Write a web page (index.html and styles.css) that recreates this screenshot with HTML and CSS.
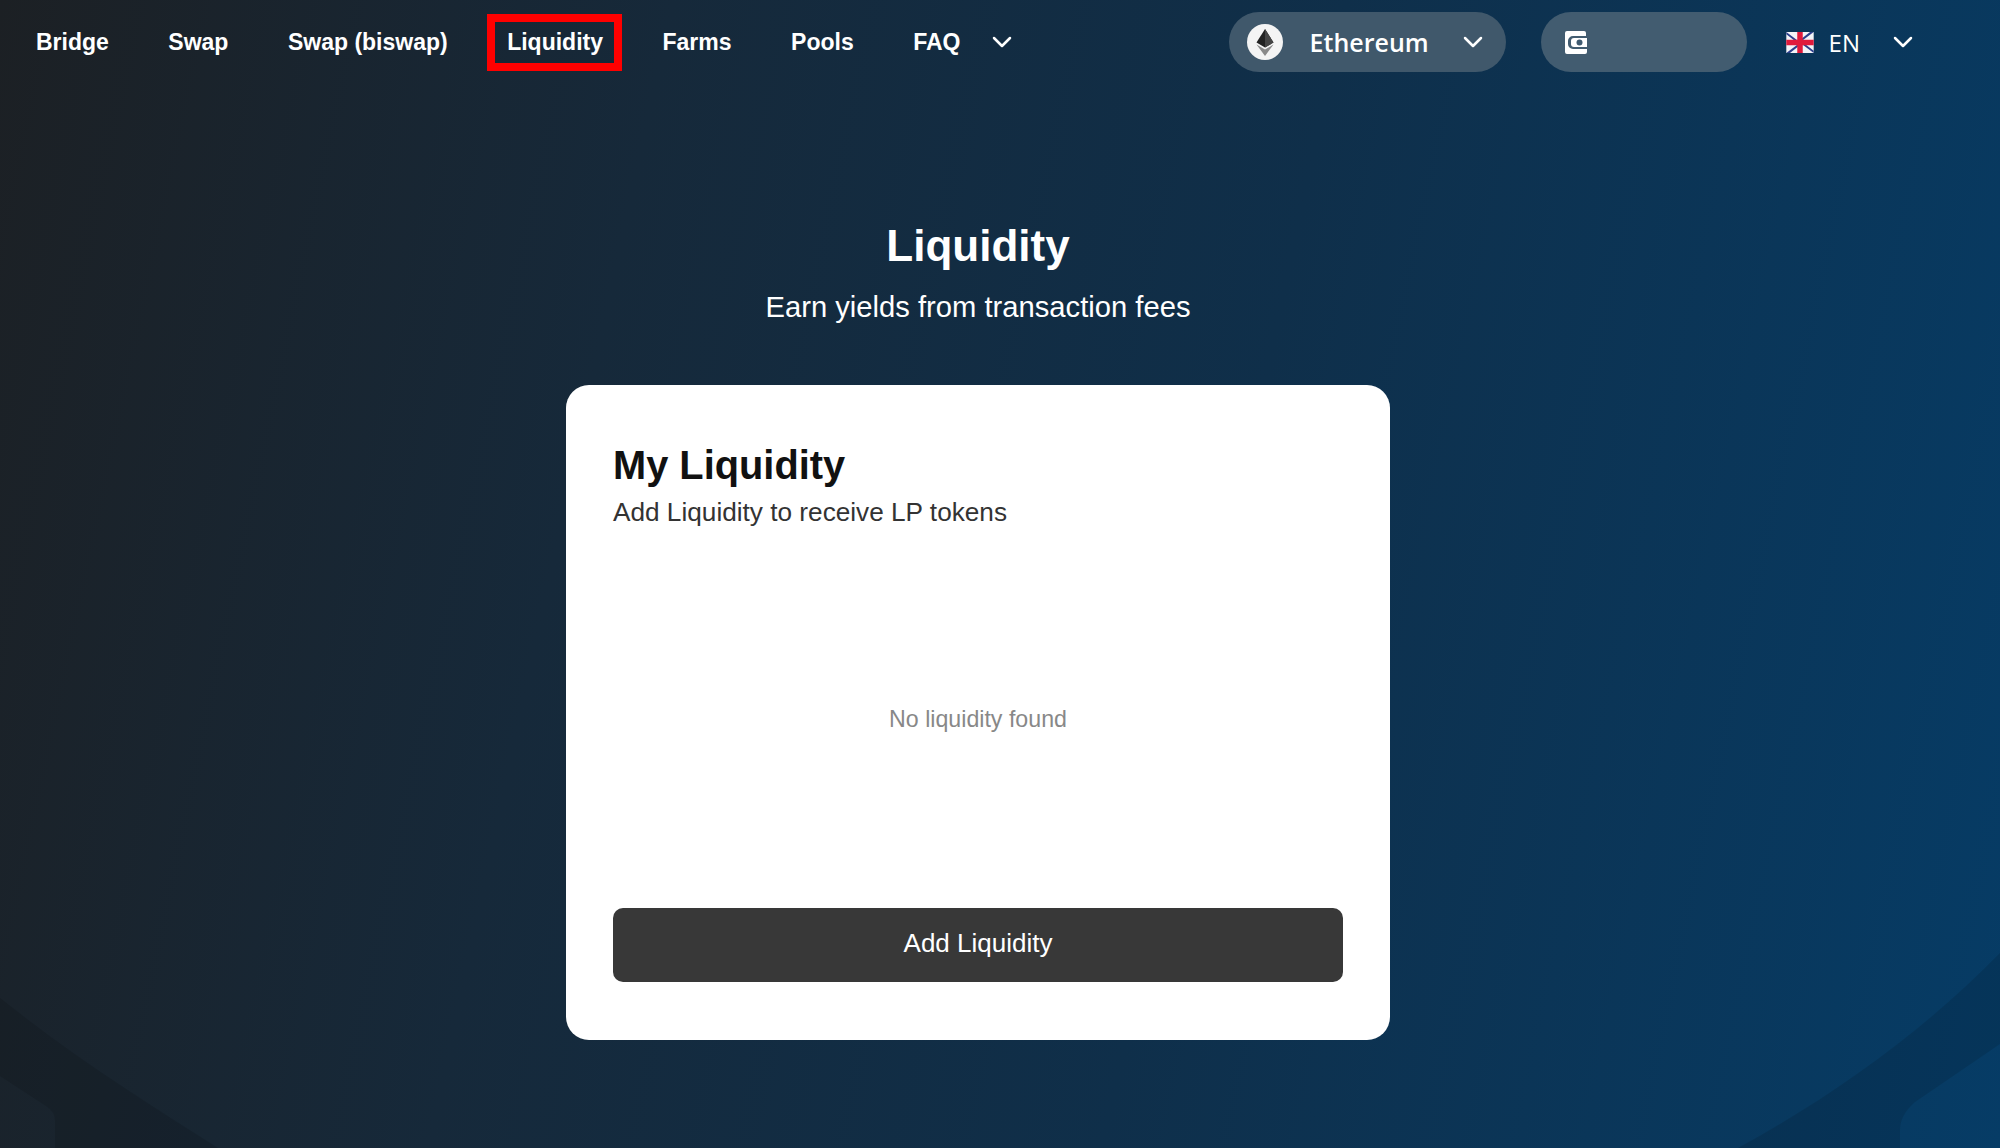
FILE: index.html
```html
<!DOCTYPE html>
<html lang="en">
<head>
<meta charset="utf-8">
<title>Liquidity</title>
<link rel="stylesheet" href="styles.css">
</head>
<body>
<svg class="backdrop" viewBox="0 0 2000 1148" aria-hidden="true">
  <path class="band" d="M0 998C75 1058 150 1105 218 1148H55V1120Q55 1112 46 1106L0 1076Z"/>
  <path class="band" d="M2000 953C1925 1030 1835 1095 1738 1148H1900V1130Q1900 1115 1915 1102L2000 1044Z"/>
</svg>
<header class="topbar">
  <nav class="nav">
    <a class="nav-link">Bridge</a>
    <a class="nav-link">Swap</a>
    <a class="nav-link">Swap (biswap)</a>
    <a class="nav-link nav-link-marked">Liquidity</a>
    <a class="nav-link">Farms</a>
    <a class="nav-link">Pools</a>
    <span class="nav-more">
      <a class="nav-link">FAQ</a>
      <svg class="chevron" viewBox="0 0 20 12"><path d="M2 2l8 8 8-8"/></svg>
    </span>
  </nav>
  <div class="actions">
    <button class="pill pill-network">
      <svg class="eth-icon" viewBox="0 0 36 36">
        <circle cx="18" cy="18" r="18" fill="#f4f4f4"/>
        <path d="M18 5l-8.500 13.500 8.500 5 8.500-5z" fill="#222"/>
        <path d="M18 5v18.500l8.500-5z" fill="#444"/>
        <path d="M18 25.500l-8.500-5L18 32l8.500-11.500z" fill="#8a8a8a"/>
      </svg>
      <span class="pill-label">Ethereum</span>
      <svg class="chevron" viewBox="0 0 20 12"><path d="M2 2l8 8 8-8"/></svg>
    </button>
    <button class="pill pill-wallet">
      <svg class="wallet-icon" viewBox="0 0 22 23">
        <path d="M2 0h17a2 2 0 0 1 2 2v3H8a5 5 0 0 0-5 5v3a5 5 0 0 0 5 5h14v3a2 2 0 0 1-2 2H2a2 2 0 0 1-2-2V2a2 2 0 0 1 2-2z" fill="#fff"/>
        <path d="M9 7h13v9H9a3 3 0 0 1-3-3v-3a3 3 0 0 1 3-3z" fill="#fff"/>
        <circle cx="14.500" cy="11.500" r="3" fill="#3f5a70"/>
      </svg>
    </button>
    <div class="lang">
      <svg class="flag" viewBox="0 0 60 46">
        <rect width="60" height="46" fill="#f4f4f8"/>
        <path d="M0 0l24 18H17L0 5zM60 0L36 18h-7L52 0zM0 46l24-18h7L8 46zM60 46L36 28h7l17 13z" fill="#2c3e8c"/>
        <path d="M24 0h12v46H24zM0 17h60v12H0z" fill="#e01a3c"/>
      </svg>
      <span class="lang-label">EN</span>
      <svg class="chevron" viewBox="0 0 20 12"><path d="M2 2l8 8 8-8"/></svg>
    </div>
  </div>
</header>
<main class="page">
  <h1 class="page-title">Liquidity</h1>
  <p class="page-sub">Earn yields from transaction fees</p>
  <section class="card">
    <h2 class="card-title">My Liquidity</h2>
    <p class="card-sub">Add Liquidity to receive LP tokens</p>
    <p class="empty">No liquidity found</p>
    <button class="primary">Add Liquidity</button>
  </section>
</main>
</body>
</html>
```

FILE: styles.css
```css
* { box-sizing: border-box; }
html, body { height: 100%; }
body {
  margin: 0;
  height: 1148px;
  overflow: hidden;
  position: relative;
  font-family: "Liberation Sans", Arial, sans-serif;
  color: #fff;
  background: linear-gradient(102deg, #1c2024 0%, #16293a 30%, #0f2f4a 60%, #063c66 100%);
}
.backdrop {
  position: absolute;
  left: 0;
  top: 0;
  width: 2000px;
  height: 1148px;
}
.band { fill: #000; fill-opacity: .11; }
.topbar {
  position: relative;
  display: flex;
  align-items: center;
  justify-content: space-between;
  height: 84px;
  padding: 0 87px 0 36px;
}
.nav { display: flex; align-items: center; gap: 59.500px; }
.nav-link {
  position: relative;
  font-size: 23px;
  font-weight: 700;
  line-height: 28px;
  white-space: nowrap;
}
.nav-link-marked::after {
  content: "";
  position: absolute;
  left: -20px;
  right: -19px;
  top: -14px;
  bottom: -15px;
  border: 8px solid #ff0000;
}
.nav-more { display: flex; align-items: center; gap: 32px; }
.chevron { width: 20px; height: 12px; flex: none; }
.chevron path { fill: none; stroke: #fff; stroke-width: 2.500; stroke-linecap: round; stroke-linejoin: round; }
.actions { display: flex; align-items: center; }
.pill {
  display: flex;
  align-items: center;
  height: 60px;
  border: 0;
  border-radius: 30px;
  background: #40586b;
  color: #fff;
  font: inherit;
}
.pill-network { width: 277px; padding: 0 23px 0 18px; }
.eth-icon { width: 36px; height: 36px; flex: none; }
.pill-label {
  font-family: "Open Sans", sans-serif;
  font-size: 25px;
  font-weight: 600;
  margin: 0 auto 0 27px;
}
.pill-wallet { width: 206px; margin-left: 35px; padding: 0 0 0 24px; background: #425c70; }
.wallet-icon { width: 22px; height: 23px; flex: none; }
.lang { display: flex; align-items: center; margin-left: 39px; }
.flag { width: 28px; height: 21px; flex: none; }
.lang-label {
  font-family: "Open Sans", sans-serif;
  font-size: 24px;
  margin: 0 33px 0 15px;
}
.page {
  position: relative;
  display: flex;
  flex-direction: column;
  align-items: center;
  width: 1956px;
}
.page-title {
  margin: 135px 0 0;
  font-size: 44px;
  line-height: 54px;
  font-weight: 700;
}
.page-sub {
  margin: 16px 0 0;
  font-size: 29.200px;
  line-height: 36px;
}
.card {
  display: flex;
  flex-direction: column;
  width: 824px;
  height: 655px;
  margin-top: 60px;
  padding: 57px 47px 58px;
  border-radius: 23px;
  background: #fff;
  color: #111;
}
.card-title {
  margin: 0;
  font-size: 39.800px;
  line-height: 46px;
  font-weight: 700;
}
.card-sub {
  margin: 8px 0 0;
  font-size: 26.200px;
  line-height: 32px;
  color: #333;
}
.empty {
  flex: 1;
  display: flex;
  align-items: center;
  justify-content: center;
  margin: 2px 0 0;
  font-size: 23.200px;
  color: #888;
}
.primary {
  height: 74px;
  padding: 0 0 3px;
  border: 0;
  border-radius: 10px;
  background: #383838;
  color: #fff;
  font: inherit;
  font-size: 26px;
}
```
